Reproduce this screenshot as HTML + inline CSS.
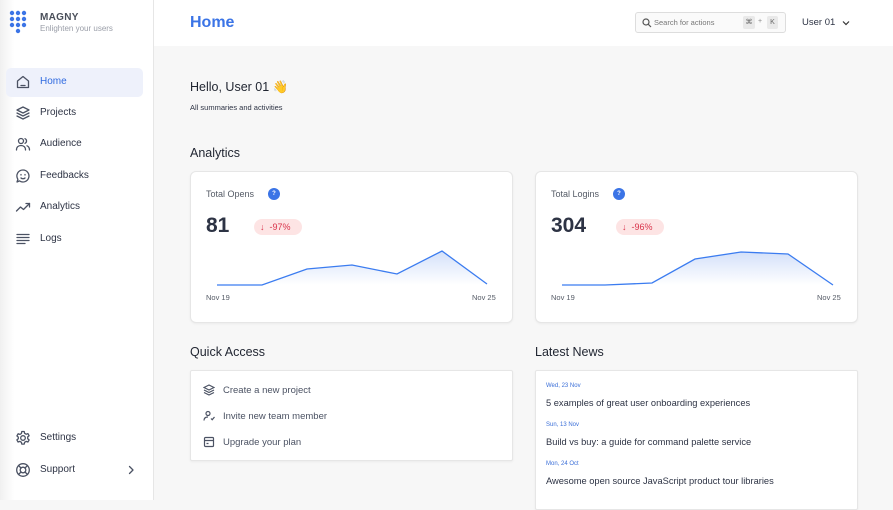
<!DOCTYPE html>
<html><head><meta charset="utf-8"><style>
*{box-sizing:border-box;margin:0;padding:0}
body{width:893px;height:500px;overflow:hidden;font-family:"Liberation Sans",sans-serif;background:#f7f7f7;position:relative;color:#1f2430}
.abs{position:absolute}
#side{left:0;top:0;width:154px;height:500px;background:linear-gradient(90deg,#f0f0f0 0,#fff 14px);border-right:1px solid #e6e6e6}
.nav{position:absolute;left:6px;width:137px;height:29px;border-radius:5px;font-size:10px;color:#2d3344}
.nav svg{position:absolute;left:9px;top:6px;width:16px;height:16px;fill:none;stroke:#4b5263;stroke-width:1.3;stroke-linecap:round;stroke-linejoin:round}
.nav span{position:absolute;left:34px;top:8px}
#head{left:154px;top:0;width:739px;height:46px;background:#fff}
.card{position:absolute;background:#fff;border:1px solid #e6e6e6;border-radius:6px;box-shadow:0 1px 2px rgba(0,0,0,.05)}
.h2{position:absolute;font-size:12.5px;color:#1f2430}
.qa{position:absolute;left:32px;font-size:9.5px;color:#4b5263}
.qa svg{position:absolute;left:-20px;top:-1px;width:12px;height:12px;fill:none;stroke:#4b5263;stroke-width:1.2}
.nd{position:absolute;left:10px;font-size:6px;color:#3b6fd8}
.nt{position:absolute;left:10px;font-size:9.3px;color:#2d3344}
</style></head><body>
<div id="side" class="abs">
<svg class="abs" style="left:9px;top:10px" width="22" height="24" fill="#3b74e6">
<circle cx="3" cy="3" r="2.2"/><circle cx="9" cy="3" r="2.2"/><circle cx="15" cy="3" r="2.2"/>
<circle cx="3" cy="9" r="2.2"/><circle cx="9" cy="9" r="2.2"/><circle cx="15" cy="9" r="2.2"/>
<circle cx="3" cy="15" r="2.2"/><circle cx="9" cy="15" r="2.2"/><circle cx="15" cy="15" r="2.2"/>
<circle cx="9" cy="21" r="2.2"/></svg>
<div class="abs" style="left:40px;top:12px;font-size:10px;font-weight:bold;color:#4a4f5a;letter-spacing:.3px">MAGNY</div>
<div class="abs" style="left:40px;top:24px;font-size:8px;color:#9a9ea8">Enlighten your users</div>
<div class="nav" style="top:68px;background:#eef1fb;color:#2f6ae0"><svg viewBox="0 0 16 16"><path d="M2.5 7L8 2.5 13.5 7v6.5h-11z"/><path d="M6 11.5h4"/></svg><span>Home</span></div>
<div class="nav" style="top:99px"><svg viewBox="0 0 16 16"><path d="M8 2l6 3-6 3-6-3z"/><path d="M2 8l6 3 6-3"/><path d="M2 11l6 3 6-3"/></svg><span>Projects</span></div>
<div class="nav" style="top:130px"><svg viewBox="0 0 16 16"><circle cx="6" cy="5" r="2.5"/><path d="M1.5 14c0-3 2-4.5 4.5-4.5s4.5 1.5 4.5 4.5"/><path d="M10 2.7a2.5 2.5 0 010 4.6M12 9.8c1.5.6 2.5 2 2.5 4.2"/></svg><span>Audience</span></div>
<div class="nav" style="top:162px"><svg viewBox="0 0 16 16"><path d="M8 2a6 6 0 11-3.5 10.9L2 14l.9-2.7A6 6 0 018 2z"/><path d="M6 10c1 1 3 1 4 0"/><path d="M6 6.5v.5M10 6.5v.5"/></svg><span>Feedbacks</span></div>
<div class="nav" style="top:193px"><svg viewBox="0 0 16 16"><path d="M1.5 12l4-4 3 2.5 6-6"/><path d="M11 4.5h3.5V8"/></svg><span>Analytics</span></div>
<div class="nav" style="top:225px"><svg viewBox="0 0 16 16"><path d="M2 3.5h12M2 6.5h12M2 9.5h12M2 12.5h8"/></svg><span>Logs</span></div>
<div class="nav" style="top:424px"><svg viewBox="0 0 16 16"><circle cx="8" cy="8" r="2.3"/><path d="M6.8 1.5h2.4l.4 1.8 1.5.9 1.8-.6 1.2 2.1-1.4 1.2v1.8l1.4 1.2-1.2 2.1-1.8-.6-1.5.9-.4 1.8H6.8l-.4-1.8-1.5-.9-1.8.6-1.2-2.1 1.4-1.2V7.1L1.9 5.9l1.2-2.1 1.8.6 1.5-.9z"/></svg><span>Settings</span></div>
<div class="nav" style="top:456px"><svg viewBox="0 0 16 16"><circle cx="8" cy="8" r="6.3"/><circle cx="8" cy="8" r="2.8"/><path d="M3.5 3.5l2.5 2.5M12.5 3.5L10 6M3.5 12.5L6 10M12.5 12.5L10 10"/></svg><span>Support</span>
<svg style="left:119px;top:8px;width:12px;height:12px" viewBox="0 0 12 12"><path d="M4.5 2.5L8 6l-3.5 3.5"/></svg></div>
</div>
<div id="head" class="abs">
<div class="abs" style="left:36px;top:14px;font-size:16px;font-weight:bold;color:#3b74e6">Home</div>
<div class="abs" style="left:481px;top:12px;width:151px;height:21px;border:1px solid #ddd;border-radius:3px;background:#fafafa">
<svg class="abs" style="left:6px;top:5px" width="10" height="10" fill="none" stroke="#555" stroke-width="1.2"><circle cx="4" cy="4" r="3"/><path d="M6.3 6.3L9 9"/></svg>
<div class="abs" style="left:18px;top:5px;font-size:7.5px;color:#777">Search for actions</div>
<div class="abs" style="left:107px;top:3px;width:12px;height:13px;background:#e9e9e9;border-radius:2px;font-size:7px;color:#666;text-align:center;line-height:13px">⌘</div>
<div class="abs" style="left:122px;top:5px;font-size:7px;color:#888">+</div>
<div class="abs" style="left:131px;top:3px;width:11px;height:13px;background:#e9e9e9;border-radius:2px;font-size:7px;color:#666;text-align:center;line-height:13px">K</div>
</div>
<div class="abs" style="left:648px;top:17px;font-size:9.5px;color:#2d3344">User 01</div>
<svg class="abs" style="left:687px;top:18px" width="10" height="10" fill="none" stroke="#333" stroke-width="1.2"><path d="M2 3.5l3 3 3-3"/></svg>
</div>
<div class="abs" style="left:190px;top:80px;font-size:12.5px;color:#1f2430">Hello, User 01 👋</div>
<div class="abs" style="left:190px;top:103px;font-size:7.5px;color:#2d3344">All summaries and activities</div>
<div class="h2" style="left:190px;top:146px">Analytics</div>
<div class="card" style="left:190px;top:171px;width:323px;height:152px">
<div class="abs" style="left:15px;top:17px;font-size:9px;color:#555b66">Total Opens</div>
<div class="abs" style="left:77px;top:16px;width:12px;height:12px;border-radius:6px;background:#3b74e6;color:#fff;font-size:6px;text-align:center;line-height:12px;font-weight:bold">?</div>
<div class="abs" style="left:15px;top:42px;font-size:21px;font-weight:bold;color:#2d3344">81</div>
<div class="abs" style="left:63px;top:47px;width:48px;height:16px;border-radius:8px;background:#fde4e4;color:#d9334a;font-size:9px;line-height:16px;padding-left:6px">↓&nbsp; -97%</div>
<svg class="abs" style="left:0;top:0" width="323" height="152"><defs><linearGradient id="g" x1="0" y1="0" x2="0" y2="1"><stop offset="0" stop-color="#3b74e6" stop-opacity=".22"/><stop offset="1" stop-color="#3b74e6" stop-opacity="0"/></linearGradient></defs>
<path d="M26 113L71 113 116 97 161 93 206 102 251 79 296 112V113H26z" fill="url(#g)"/>
<polyline points="26,113 71,113 116,97 161,93 206,102 251,79 296,112" fill="none" stroke="#3b7cf0" stroke-width="1.3"/></svg>
<div class="abs" style="left:15px;top:121px;font-size:7.5px;color:#555b66">Nov 19</div>
<div class="abs" style="left:281px;top:121px;font-size:7.5px;color:#555b66">Nov 25</div>
</div>
<div class="card" style="left:535px;top:171px;width:323px;height:152px">
<div class="abs" style="left:15px;top:17px;font-size:9px;color:#555b66">Total Logins</div>
<div class="abs" style="left:77px;top:16px;width:12px;height:12px;border-radius:6px;background:#3b74e6;color:#fff;font-size:6px;text-align:center;line-height:12px;font-weight:bold">?</div>
<div class="abs" style="left:15px;top:42px;font-size:21px;font-weight:bold;color:#2d3344">304</div>
<div class="abs" style="left:80px;top:47px;width:48px;height:16px;border-radius:8px;background:#fde4e4;color:#d9334a;font-size:9px;line-height:16px;padding-left:6px">↓&nbsp; -96%</div>
<svg class="abs" style="left:0;top:0" width="323" height="152">
<path d="M26 113L69 113 116 111 159 87 205 80 252 82 297 113V113H26z" fill="url(#g)"/>
<polyline points="26,113 69,113 116,111 159,87 205,80 252,82 297,113" fill="none" stroke="#3b7cf0" stroke-width="1.3"/></svg>
<div class="abs" style="left:15px;top:121px;font-size:7.5px;color:#555b66">Nov 19</div>
<div class="abs" style="left:281px;top:121px;font-size:7.5px;color:#555b66">Nov 25</div>
</div>
<div class="h2" style="left:190px;top:345px">Quick Access</div>
<div class="card" style="left:190px;top:370px;width:323px;height:91px;border-radius:2px">
<div class="qa" style="top:14px"><svg viewBox="0 0 12 12"><path d="M6 1l5 2.5-5 2.5-5-2.5z"/><path d="M1 6l5 2.5L11 6M1 8.5L6 11l5-2.5"/></svg>Create a new project</div>
<div class="qa" style="top:40px"><svg viewBox="0 0 12 12"><circle cx="5" cy="3.5" r="2"/><path d="M1 10.5c0-2.5 1.8-3.5 4-3.5M8 8.5l1.2 1.2L11.5 7"/></svg>Invite new team member</div>
<div class="qa" style="top:66px"><svg viewBox="0 0 12 12"><rect x="1.5" y="1.5" width="9" height="9" rx="1"/><path d="M1.5 4.5h9M3.5 7.5h2"/></svg>Upgrade your plan</div>
</div>
<div class="h2" style="left:535px;top:345px">Latest News</div>
<div class="card" style="left:535px;top:370px;width:323px;height:140px;border-radius:2px">
<div class="nd" style="top:12px">Wed, 23 Nov</div>
<div class="nt" style="top:27px">5 examples of great user onboarding experiences</div>
<div class="nd" style="top:51px">Sun, 13 Nov</div>
<div class="nt" style="top:66px">Build vs buy: a guide for command palette service</div>
<div class="nd" style="top:90px">Mon, 24 Oct</div>
<div class="nt" style="top:105px">Awesome open source JavaScript product tour libraries</div>
</div>
</body></html>
